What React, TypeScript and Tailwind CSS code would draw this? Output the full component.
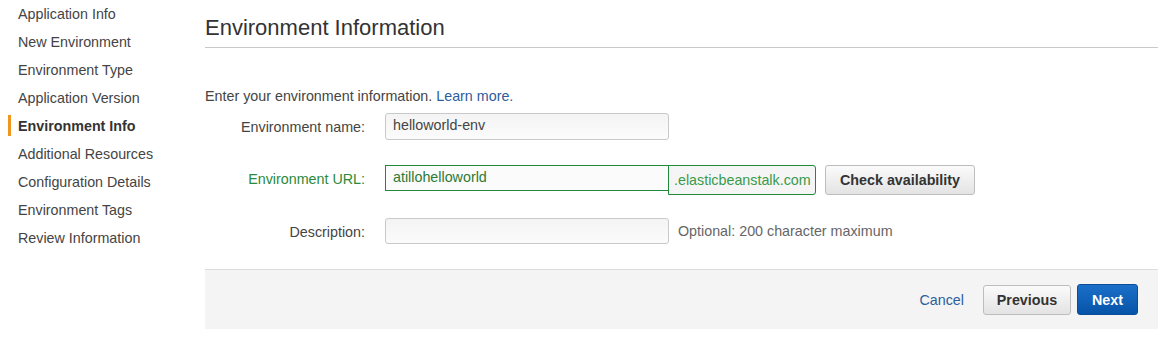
import React from "react";

const items = [
  "Application Info",
  "New Environment",
  "Environment Type",
  "Application Version",
  "Environment Info",
  "Additional Resources",
  "Configuration Details",
  "Environment Tags",
  "Review Information",
];

export default function App() {
  return (
    <div
      className="flex w-[1168px] h-[339px] bg-white text-[#444] text-[14.3px] leading-[22px] overflow-hidden"
      style={{ fontFamily: '"Liberation Sans", Arial, sans-serif' }}
    >
      <div className="w-[205px] shrink-0">
        {items.map((it) => {
          const active = it === "Environment Info";
          return (
            <div key={it} className="relative h-[28px] flex items-center pl-[18px]">
              {active && (
                <div className="absolute left-[8px] top-[3px] w-[3px] h-[21px] bg-[#f0961d]" />
              )}
              <span className={active ? "font-bold text-[#333]" : "text-[#444]"}>{it}</span>
            </div>
          );
        })}
      </div>

      <div className="w-[953px] shrink-0">
        <div className="h-[48px] border-b border-[#c8c8c8] flex items-end pb-[5px]">
          <h1 className="text-[22px] leading-[28px] text-[#333]">Environment Information</h1>
        </div>

        <div className="mt-[38px] h-[20px] flex items-center">
          Enter your environment information.&nbsp;
          <span className="text-[#2e5d9d]">Learn more.</span>
        </div>

        {/* Row 1 */}
        <div className="mt-[7px] flex items-center h-[26px]">
          <div className="w-[160px] text-right pt-px">Environment name:</div>
          <div className="ml-[20px] w-[284px] h-[27px] rounded-[3px] border border-[#c9c9c9] bg-gradient-to-b from-[#f4f4f4] to-[#fbfbfb] flex items-center px-[7px] pb-[2px] text-[#444]">
            helloworld-env
          </div>
        </div>

        {/* Row 2 */}
        <div className="mt-[26px] flex items-start h-[30px]">
          <div className="w-[160px] text-right text-[#2c8a3c] h-[26px] flex items-center justify-end pt-px">
            Environment URL:
          </div>
          <div className="ml-[20px] w-[284px] h-[26px] border border-[#1f8a3b] bg-[#fbfbfb] flex items-center px-[7px] pb-[2px] text-[#2c7a36]">
            atillohelloworld
          </div>
          <div className="-ml-px w-[148px] h-[30px] border border-[#1f8a3b] rounded-r-[3px] bg-[#f5f5f5] flex items-center pl-[5px] text-[#3a9a4a]">
            .elasticbeanstalk.com
          </div>
          <div className="ml-[9px] w-[150px] h-[30px] rounded-[3px] border border-[#bdbdbd] bg-gradient-to-b from-[#fbfbfb] to-[#e3e3e3] flex items-center justify-center font-bold text-[#333]">
            Check availability
          </div>
        </div>

        {/* Row 3 */}
        <div className="mt-[23px] flex items-center h-[26px]">
          <div className="w-[160px] text-right pt-px">Description:</div>
          <div className="ml-[20px] w-[284px] h-[26px] rounded-[3px] border border-[#c9c9c9] bg-gradient-to-b from-[#f4f4f4] to-[#fbfbfb]" />
          <div className="ml-[9px] text-[#666]">Optional: 200 character maximum</div>
        </div>

        {/* Footer */}
        <div className="mt-[25px] h-[60px] border-t border-[#dcdcdc] bg-[#f4f4f4] flex items-center justify-end pr-[20px]">
          <span className="text-[#2e5d9d] mr-[19px]">Cancel</span>
          <div className="w-[88px] h-[30px] rounded-[3px] border border-[#bdbdbd] bg-gradient-to-b from-[#fbfbfb] to-[#e3e3e3] flex items-center justify-center font-bold text-[#333]">
            Previous
          </div>
          <div className="ml-[6px] w-[61px] h-[31px] rounded-[3px] border border-[#0a4d96] bg-gradient-to-b from-[#1b6fc8] to-[#0654a8] flex items-center justify-center font-bold text-white">
            Next
          </div>
        </div>
      </div>
    </div>
  );
}
